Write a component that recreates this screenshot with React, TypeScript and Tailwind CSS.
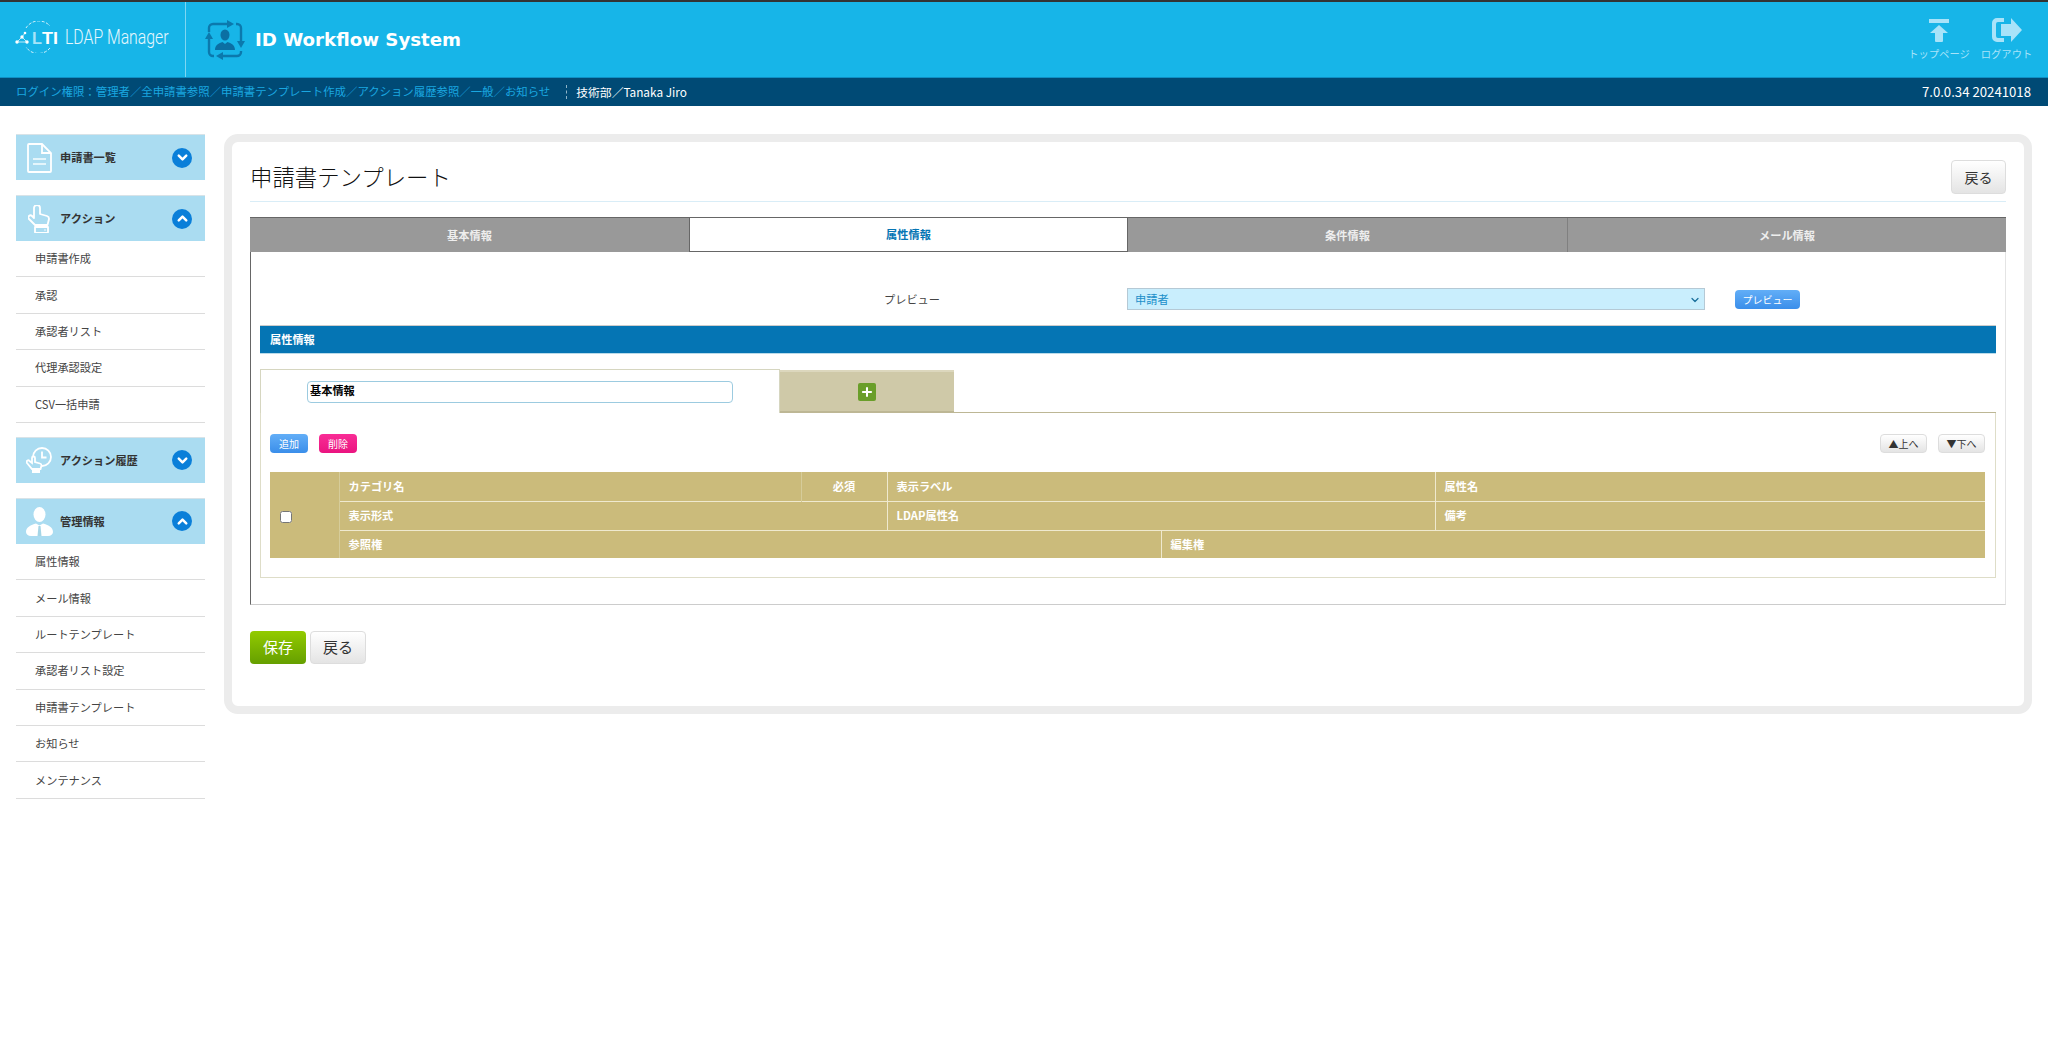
import { ChevronDown, ChevronUp, Plus } from "lucide-react";
import type { ReactNode } from "react";

const actionItems = ["申請書作成", "承認", "承認者リスト", "代理承認設定", "CSV一括申請"];
const adminItems = ["属性情報", "メール情報", "ルートテンプレート", "承認者リスト設定", "申請書テンプレート", "お知らせ", "メンテナンス"];
const tabs = ["基本情報", "属性情報", "条件情報", "メール情報"];

function DocIcon() {
  return (
    <svg width="25" height="30" viewBox="0 0 25 30" fill="none" stroke="#fff" strokeWidth="1.800">
      <path d="M2 1h13l9 9v18a1 1 0 0 1-1 1h-21a1 1 0 0 1-1-1v-26a1 1 0 0 1 1-1z" />
      <path d="M15 1v9h9" />
      <path d="M6 16h13M6 21h13" stroke="#e4f5fb" />
    </svg>
  );
}

function HandIcon() {
  return (
    <svg width="22" height="28" viewBox="0 0 22 28" fill="none" stroke="#fff" strokeWidth="1.800" strokeLinejoin="round">
      <path d="M6 9V3a3 3 0 0 1 6 0v6l7 2a3 3 0 0 1 2 3l-1.500 6H7L1 14a2 2 0 0 1 3-3l2 2z" />
      <path d="M7 22h13v5a1 1 0 0 1-1 1H8a1 1 0 0 1-1-1z" />
      <circle cx="17" cy="25" r="0.800" fill="#fff" stroke="none" />
    </svg>
  );
}

function ClockHandIcon() {
  return (
    <svg width="26" height="26" viewBox="0 0 26 26" fill="none" stroke="#fff" strokeWidth="1.800">
      <circle cx="16" cy="10" r="9" />
      <path d="M16 4.500v6h4.500" />
      <path d="M6 11a1.500 1.500 0 0 1 3 0v4l5 1.500a2 2 0 0 1 1.500 2l-1 3.500H6l-5-6a1.500 1.500 0 0 1 2.500-2l2.500 2z" fill="#aadcf1" />
      <path d="M6 23h8v3H6z" fill="#fff" stroke="none" />
    </svg>
  );
}

function PersonIcon() {
  return (
    <svg width="27" height="29" viewBox="0 0 27 29" fill="#fff">
      <ellipse cx="13.500" cy="7.500" rx="6" ry="7.500" />
      <path d="M0 25c0-5 5-7 10-8.500l3.500 2 3.500-2c5 1.500 10 3.500 10 8.500 0 2-2 4-5 4H5c-3 0-5-2-5-4z" />
      <path d="M12.500 19h2l1 10h-4z" fill="#a5d5e6" />
    </svg>
  );
}

function WorkflowIcon() {
  return (
    <svg width="38" height="38" viewBox="0 0 38 38" fill="none" stroke="#0b79ad" strokeWidth="2.400" overflow="visible">
      <path d="M3 11V7a4 4 0 0 1 4-4h14" />
      <path d="M21-1l7 4-7 4z" fill="#0b79ad" stroke="none" />
      <path d="M30 3h1a4 4 0 0 1 4 4v13" />
      <path d="M31 20l4 7 4-7z" fill="#0b79ad" stroke="none" />
      <path d="M35 30v1a4 4 0 0 1-4 4H17" />
      <path d="M17 31l-7 4 7 4z" fill="#0b79ad" stroke="none" />
      <path d="M8 35H7a4 4 0 0 1-4-4V18" />
      <path d="M-1 18l4-7 4 7z" fill="#0b79ad" stroke="none" />
      <ellipse cx="19" cy="14" rx="4.500" ry="5.500" fill="#0b6fa3" stroke="none" />
      <path d="M9 29c0-5 4-7 7.500-8l2.500 2 2.500-2c3.500 1 7.500 3 7.500 8z" fill="#0b6fa3" stroke="none" />
    </svg>
  );
}

function LogoMark() {
  return (
    <svg width="43" height="32" viewBox="0 0 43 32" fill="none" className="shrink-0">
      <path d="M11 7a15 15 0 0 1 24-2M35 27a15 15 0 0 1-24-1" stroke="#d7f2fb" strokeWidth="1" strokeDasharray="3 1.500" />
      <g stroke="#fff" strokeWidth="0.700">
        <path d="M2 21l5-5 5 5M7 16l3-4M2 21h10" />
      </g>
      <g fill="#fff">
        <circle cx="2" cy="21" r="1.700" />
        <circle cx="7" cy="16" r="1.700" />
        <circle cx="12" cy="21" r="1.700" />
        <circle cx="10" cy="12" r="1.300" />
      </g>
      <text x="17" y="23" fontFamily="'Liberation Sans', sans-serif" fontSize="17" fontWeight="700" fill="#a6e4f8" textLength="10" lengthAdjust="spacingAndGlyphs">L</text>
      <text x="27" y="23" fontFamily="'Liberation Sans', sans-serif" fontSize="17" fontWeight="700" fill="#fff" textLength="16" lengthAdjust="spacingAndGlyphs">TI</text>
    </svg>
  );
}

function NavHeader({ icon, label, open }: { icon: ReactNode; label: string; open: boolean }) {
  return (
    <div className="flex h-[46px] items-center border-t border-[#d8e3e8] bg-[#aadcf1] pr-[13px]">
      <div className="flex w-[44px] justify-center pl-[2px]">{icon}</div>
      <span className="flex-1 text-[11.200px] font-bold text-[#333]">{label}</span>
      <span className="flex h-5 w-5 items-center justify-center rounded-full bg-[#0a7fd9] text-white">
        {open ? <ChevronUp size={15} strokeWidth={4} /> : <ChevronDown size={15} strokeWidth={4} />}
      </span>
    </div>
  );
}

function NavItems({ items }: { items: string[] }) {
  return (
    <ul>
      {items.map((item) => (
        <li key={item} className="flex h-[36.400px] items-center border-b border-[#dcdcdc] pl-[19px] text-[11.200px] text-[#444]">
          {item}
        </li>
      ))}
    </ul>
  );
}

export default function App() {
  return (
    <div className="min-h-[1053px] bg-white font-['Noto_Sans_CJK_JP','Noto_Sans',sans-serif]">
      <header className="flex h-[77px] border-t-2 border-[#333] bg-[#17b5e8]">
        <div className="flex w-[186px] items-center border-r border-[#7fd6f2] pb-[5px] pl-[15px]">
          <LogoMark />
          <span className="ml-[7px] inline-block w-[101px] shrink-0 origin-left scale-x-[0.79] whitespace-nowrap font-['Roboto',sans-serif] text-[20px] font-light text-[#e6f7fd]">LDAP Manager</span>
        </div>
        <div className="flex items-center pl-[20px]">
          <WorkflowIcon />
          <span className="ml-[11px] mt-[1px] font-['DejaVu_Sans',sans-serif] text-[18.200px] font-bold text-white">ID Workflow System</span>
        </div>
        <div className="ml-auto flex pr-[16px] pt-[16px] text-[10.300px] text-[#a8e3f9]">
          <div className="flex w-[60px] flex-col items-center">
            <svg width="20" height="24" viewBox="0 0 20 24" fill="#a8e3f9">
              <rect x="0" y="1" width="20" height="4" />
              <path d="M10 7l9 8h-5v8a1 1 0 0 1-1 1H7a1 1 0 0 1-1-1v-8H1z" />
            </svg>
            <span className="mt-[4px] whitespace-nowrap leading-4">トップページ</span>
          </div>
          <div className="ml-[12px] flex w-[51px] flex-col items-center">
            <svg width="30" height="24" viewBox="0 0 30 24" fill="#a8e3f9">
              <path d="M12 0v4H6a2 2 0 0 0-2 2v12a2 2 0 0 0 2 2h6v4H5a5 5 0 0 1-5-5V5a5 5 0 0 1 5-5z" />
              <path d="M19 0l11 12-11 12v-6H9V6h10z" />
            </svg>
            <span className="mt-[4px] whitespace-nowrap leading-4">ログアウト</span>
          </div>
        </div>
      </header>
      <div className="flex h-[29px] items-center border-t border-[#0f8fc4] bg-[#004a75] pl-[16px] pr-[17px] text-[11.400px]">
        <span className="text-[#1aa7e0]">ログイン権限：管理者／全申請書参照／申請書テンプレート作成／アクション履歴参照／一般／お知らせ</span>
        <span className="ml-[16px] h-[14px] border-l border-dashed border-[#8fb5c9]" />
        <span className="ml-[9px] text-[11.800px] text-white">技術部／Tanaka Jiro</span>
        <span className="ml-auto text-[13.200px] text-white">7.0.0.34 20241018</span>
      </div>

      <div className="flex pl-[16px] pr-[16px] pt-[28px]">
        <aside className="flex w-[189px] flex-col">
          <NavHeader icon={<DocIcon />} label="申請書一覧" open={false} />
          <div className="mt-[15px]">
            <NavHeader icon={<HandIcon />} label="アクション" open />
            <NavItems items={actionItems} />
          </div>
          <div className="mt-[14px]">
            <NavHeader icon={<ClockHandIcon />} label="アクション履歴" open={false} />
          </div>
          <div className="mt-[15px]">
            <NavHeader icon={<PersonIcon />} label="管理情報" open />
            <NavItems items={adminItems} />
          </div>
        </aside>

        <main className="ml-[19px] h-[580px] flex-1 rounded-[14px] border-8 border-[#ececec] px-[18px] pt-[18px]">
          <div className="flex h-[42px] items-start justify-between border-b border-[#d9edf7]">
            <h1 className="text-[22.400px] font-light leading-[32px] text-[#111]">申請書テンプレート</h1>
            <button className="h-[34px] w-[55px] rounded border border-[#ddd] bg-gradient-to-b from-white to-[#e4e4e4] text-[14px] text-[#333]">戻る</button>
          </div>

          <div className="mt-[15px] grid h-[35px] grid-cols-4 border-t border-[#666] bg-[#999] text-[11.200px] font-bold text-[#eee]">
            {tabs.map((tab, i) =>
              i === 1 ? (
                <div key={tab} className="flex items-center justify-center border-x border-b border-[#666] bg-white text-[#0575b4]">{tab}</div>
              ) : (
                <div key={tab} className={`flex items-center justify-center ${i === 3 ? "border-l border-[#808080]" : ""}`}>{tab}</div>
              )
            )}
          </div>

          <section className="h-[353px] border-b border-r border-b-[#ccc] border-r-[#e4e4e4] border-l border-l-[#666] px-[9px]">
            <div className="flex h-[73px] items-center pt-[21px] text-[11.200px]">
              <div className="w-[867px] pl-[624px] text-[#444]">プレビュー</div>
              <div className="relative w-[578px]">
                <select className="h-[22px] w-full appearance-none border border-[#b5c9d5] bg-[#c9eefd] pl-[7px] text-[11.200px] text-[#1a8ec9]">
                  <option>申請者</option>
                </select>
                <ChevronDown size={12} strokeWidth={2.500} className="pointer-events-none absolute right-[4px] top-[6px] text-[#1a6f9c]" />
              </div>
              <button className="ml-[30px] h-[19px] w-[65px] rounded bg-gradient-to-b from-[#62aef7] to-[#3a8eea] text-[10px] text-white">プレビュー</button>
            </div>

            <div className="flex h-[29px] items-center border-t border-b border-t-[#ccc] border-b-[#b9dbea] bg-[#0575b4] pl-[10px] text-[11.200px] font-bold text-white">属性情報</div>

            <div className="mt-[15px] flex h-[44px]">
              <div className="w-[520px] border-x border-t border-[#d6d6c0] pl-[46px] pt-[11px]">
                <input
                  readOnly
                  value="基本情報"
                  className="block h-[22px] w-[426px] rounded border border-[#9ccbe0] px-[2px] pb-[5px] text-[11.200px] font-bold text-black"
                />
              </div>
              <div className="mt-[1px] flex w-[174px] items-center justify-center border-b-2 border-t-2 border-b-[#bdb795] border-t-[#dcd7bd] bg-[#cfc9a8]">
                <span className="flex h-[18px] w-[18px] items-center justify-center rounded-[2px] bg-[#6a9e2a] text-white">
                  <Plus size={14} strokeWidth={3.500} />
                </span>
              </div>
              <div className="flex-1 border-b border-[#bdb795]" />
            </div>

            <div className="h-[165px] border-x border-b border-[#deddc8] pl-[9px] pr-[10px] pt-[21px]">
              <div className="flex h-[19px] gap-[11px] text-[10px]">
                <button className="w-[38px] rounded bg-gradient-to-b from-[#62aef7] to-[#3a8eea] text-white">追加</button>
                <button className="w-[38px] rounded bg-gradient-to-b from-[#f92c96] to-[#ea1380] text-white">削除</button>
                <button className="ml-auto w-[47px] rounded border border-[#ddd] bg-gradient-to-b from-white to-[#e4e4e4] text-[#333]">▲上へ</button>
                <button className="w-[47px] rounded border border-[#ddd] bg-gradient-to-b from-white to-[#e4e4e4] text-[#333]">▼下へ</button>
              </div>

              <table className="mt-[19px] w-full table-fixed border-collapse bg-[#cbbb7b] text-left text-[11.200px] font-bold text-white">
                <colgroup>
                  <col className="w-[69px]" />
                  <col className="w-[462px]" />
                  <col className="w-[86px]" />
                  <col className="w-[274px]" />
                  <col className="w-[274px]" />
                  <col />
                </colgroup>
                <tbody>
                  <tr className="h-[29px] border-b border-[#efe9cf]">
                    <td rowSpan={3} className="border-r border-[#d6cc9a] pl-[10px] pt-[3px]">
                      <input type="checkbox" className="block h-[14px] w-[12px]" />
                    </td>
                    <td className="border-r border-[#d6cc9a] pl-[9px]">カテゴリ名</td>
                    <td className="border-r border-[#efe9cf] text-center">必須</td>
                    <td colSpan={2} className="border-r border-[#efe9cf] pl-[9px]">表示ラベル</td>
                    <td className="pl-[9px]">属性名</td>
                  </tr>
                  <tr className="h-[29px] border-b border-[#efe9cf]">
                    <td colSpan={2} className="border-r border-[#efe9cf] pl-[9px]">表示形式</td>
                    <td colSpan={2} className="border-r border-[#efe9cf] pl-[9px]">LDAP属性名</td>
                    <td className="pl-[9px]">備考</td>
                  </tr>
                  <tr className="h-[28px]">
                    <td colSpan={3} className="border-r border-[#efe9cf] pl-[9px]">参照権</td>
                    <td colSpan={3} className="pl-[9px]">編集権</td>
                  </tr>
                </tbody>
              </table>
            </div>
          </section>

          <div className="mt-[26px] flex gap-[4px] text-[15px]">
            <button className="h-[33px] w-[56px] rounded bg-gradient-to-b from-[#93cb00] to-[#659f00] text-white">保存</button>
            <button className="h-[33px] w-[56px] rounded border border-[#ddd] bg-gradient-to-b from-white to-[#e4e4e4] text-[#333]">戻る</button>
          </div>
        </main>
      </div>
    </div>
  );
}
